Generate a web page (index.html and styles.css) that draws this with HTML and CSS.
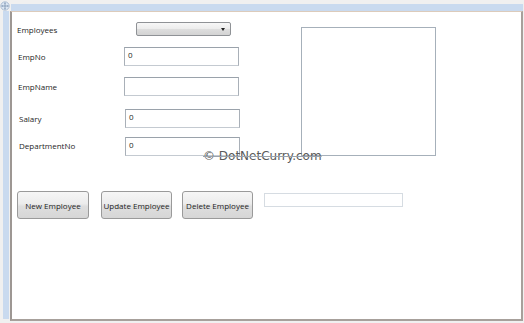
FILE: index.html
```html
<!DOCTYPE html>
<html lang="en">
<head>
    <meta charset="UTF-8">
    <title>Employee Designer</title>
    <link rel="stylesheet" href="styles.css">
</head>
<body>
    <div class="designer">
        <svg class="handle" width="10" height="10" viewBox="0 0 10 10">
            <circle cx="5" cy="5" r="4.2" fill="#dbe6f3" stroke="#9fb3cc" stroke-width="0.8"/>
            <path d="M5 1.6v6.8M1.6 5h6.8" stroke="#7f95b0" stroke-width="0.8"/>
            <path d="M5 1.4l-1 1.2h2zM5 8.6l-1-1.2h2zM1.4 5l1.2-1v2zM8.6 5l-1.2-1v2z" fill="#7f95b0"/>
        </svg>
        <div class="ruler-top"></div>
        <div class="workspace">
            <div class="ruler-left"></div>
            <div class="canvas">
                <div class="top-area">
                    <div class="form">
                        <div class="field first">
                            <span class="label">Employees</span>
                            <div class="combo"><span class="arrow"></span></div>
                        </div>
                        <div class="field f2">
                            <span class="label">EmpNo</span>
                            <div class="textbox">0</div>
                        </div>
                        <div class="field f3">
                            <span class="label">EmpName</span>
                            <div class="textbox"></div>
                        </div>
                        <div class="field f4">
                            <span class="label">Salary</span>
                            <div class="textbox">0</div>
                        </div>
                        <div class="field f5">
                            <span class="label">DepartmentNo</span>
                            <div class="textbox">0</div>
                        </div>
                    </div>
                    <div class="image-box"></div>
                </div>
                <div class="actions">
                    <button class="btn new">New Employee</button>
                    <button class="btn update">Update Employee</button>
                    <button class="btn delete">Delete Employee</button>
                    <div class="status"></div>
                </div>
                <div class="watermark">&copy; DotNetCurry.com</div>
            </div>
        </div>
    </div>
</body>
</html>
```

FILE: styles.css
```css
* {
    box-sizing: border-box;
}

body {
    margin: 0;
    background: #f0f0f0;
    font-family: 'Open Sans', sans-serif;
    font-size: 8px;
    color: #1e1e1e;
}

.designer {
    position: relative;
    width: 524px;
    height: 323px;
    padding-top: 4px;
}

.handle {
    position: absolute;
    left: 0;
    top: 1px;
}

.ruler-top {
    margin-left: 11px;
    margin-right: 1px;
    height: 7px;
    background: #c9daef;
}

.workspace {
    display: flex;
}

.ruler-left {
    width: 6px;
    height: 308px;
    margin-left: 3px;
    margin-right: 1px;
    background: #c9daef;
}

.canvas {
    position: relative;
    width: 513px;
    height: 310px;
    background: #fff;
    border-top: 1px solid #dccbbb;
    border-left: 2px solid #9d9793;
    border-right: 2px solid #a7a09b;
    border-bottom: 2px solid #a7a09b;
    padding: 10px 0 0 5px;
}

/* form + image */
.top-area {
    display: flex;
    align-items: flex-start;
    gap: 61px;
}

.form {
    width: 223px;
}

.field {
    display: flex;
    align-items: center;
}

.field.f2 { margin-top: 11px; }
.field.f3 { margin-top: 11px; }
.field.f4 { margin-top: 13px; }
.field.f5 { margin-top: 9px; }

.label {
    width: 107px;
}

.field.f2 .label,
.field.f3 .label {
    padding-left: 1px;
}

.field.f4 .label,
.field.f5 .label {
    width: 108px;
    padding-left: 2px;
}

.field.f5 .label {
    margin-top: -3px;
}

.combo {
    position: relative;
    width: 95px;
    height: 14px;
    margin-left: 12px;
    border: 1px solid #8f9296;
    border-radius: 2px;
    background: linear-gradient(#f7f7f7, #ececec 50%, #dedede 51%, #d3d3d3);
}

.arrow {
    position: absolute;
    right: 5px;
    top: 5px;
    border-left: 2.5px solid transparent;
    border-right: 2.5px solid transparent;
    border-top: 3px solid #222;
}

.textbox {
    width: 115px;
    height: 19px;
    border: 1px solid #a9b0b8;
    border-top-color: #9aa2ab;
    border-bottom-color: #c4cad1;
    padding: 1px 3px;
    line-height: 12px;
}

.image-box {
    width: 135px;
    height: 129px;
    margin-top: 5px;
    border: 1px solid #a6b0ba;
}

/* buttons */
.actions {
    display: flex;
    align-items: flex-start;
    margin-top: 35px;
}

.btn {
    height: 28px;
    padding: 0;
    font-family: 'Open Sans', sans-serif;
    font-size: 8px;
    color: #1e1e1e;
    border: 1px solid #9a9a9a;
    border-radius: 3px;
    background: linear-gradient(#f6f6f6, #ececec 45%, #dedede 55%, #d6d6d6);
}

.btn.new { width: 72px; }
.btn.update { width: 71px; margin-left: 12px; }
.btn.delete { width: 71px; margin-left: 10px; }

.status {
    width: 139px;
    height: 14px;
    margin: 2px 0 0 11px;
    border: 1px solid #d6dce2;
}

.watermark {
    position: absolute;
    left: 191px;
    top: 137px;
    font-family: 'DejaVu Sans', sans-serif;
    font-size: 12px;
    color: #5a5a5a;
    text-decoration: line-through;
    text-decoration-color: #9aa2ab;
    text-decoration-thickness: 1px;
}
```
